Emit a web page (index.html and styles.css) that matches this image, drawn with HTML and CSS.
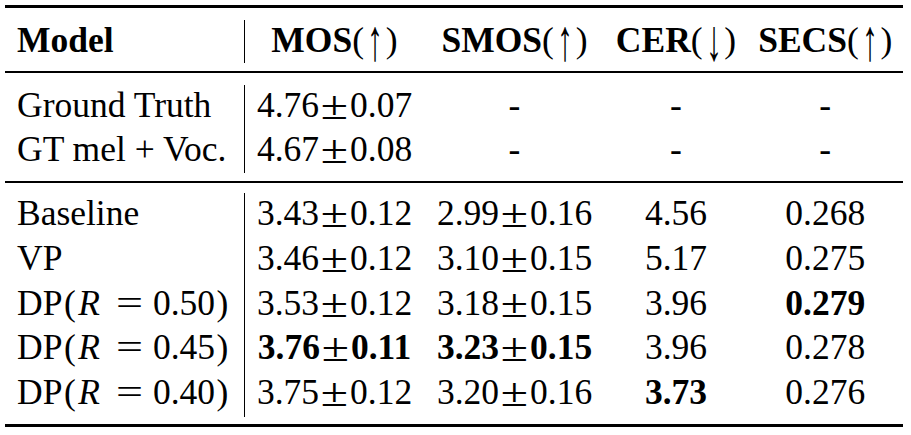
FILE: index.html
```html
<!DOCTYPE html>
<html>
<head>
<meta charset="utf-8">
<link rel="stylesheet" href="styles.css">
</head>
<body>
<div class="table">
  <div class="rule rule-top"></div>
  <div class="row head">
    <div class="cell first">Model</div>
    <div class="cell">MOS<span class="par">(<span class="arr">↑</span>)</span></div>
    <div class="cell">SMOS<span class="par">(<span class="arr">↑</span>)</span></div>
    <div class="cell">CER<span class="par">(<span class="arr">↓</span>)</span></div>
    <div class="cell">SECS<span class="par">(<span class="arr">↑</span>)</span></div>
  </div>
  <div class="rule rule-mid"></div>
  <div class="group g1">
    <div class="row">
      <div class="cell first">Ground Truth</div>
      <div class="cell">4.76<span class="pm">±</span>0.07</div>
      <div class="cell">-</div>
      <div class="cell">-</div>
      <div class="cell">-</div>
    </div>
    <div class="row">
      <div class="cell first">GT mel + Voc.</div>
      <div class="cell">4.67<span class="pm">±</span>0.08</div>
      <div class="cell">-</div>
      <div class="cell">-</div>
      <div class="cell">-</div>
    </div>
  </div>
  <div class="rule rule-sep"></div>
  <div class="group g2">
    <div class="row">
      <div class="cell first">Baseline</div>
      <div class="cell">3.43<span class="pm">±</span>0.12</div>
      <div class="cell">2.99<span class="pm">±</span>0.16</div>
      <div class="cell">4.56</div>
      <div class="cell">0.268</div>
    </div>
    <div class="row">
      <div class="cell first">VP</div>
      <div class="cell">3.46<span class="pm">±</span>0.12</div>
      <div class="cell">3.10<span class="pm">±</span>0.15</div>
      <div class="cell">5.17</div>
      <div class="cell">0.275</div>
    </div>
    <div class="row">
      <div class="cell first">DP<span class="paren">(</span><i class="var">R</i><span class="eq">=</span>0.50<span class="paren">)</span></div>
      <div class="cell">3.53<span class="pm">±</span>0.12</div>
      <div class="cell">3.18<span class="pm">±</span>0.15</div>
      <div class="cell">3.96</div>
      <div class="cell"><b>0.279</b></div>
    </div>
    <div class="row">
      <div class="cell first">DP<span class="paren">(</span><i class="var">R</i><span class="eq">=</span>0.45<span class="paren">)</span></div>
      <div class="cell"><b>3.76</b><span class="pm">±</span><b>0.11</b></div>
      <div class="cell"><b>3.23</b><span class="pm">±</span><b>0.15</b></div>
      <div class="cell">3.96</div>
      <div class="cell">0.278</div>
    </div>
    <div class="row">
      <div class="cell first">DP<span class="paren">(</span><i class="var">R</i><span class="eq">=</span>0.40<span class="paren">)</span></div>
      <div class="cell">3.75<span class="pm">±</span>0.12</div>
      <div class="cell">3.20<span class="pm">±</span>0.16</div>
      <div class="cell"><b>3.73</b></div>
      <div class="cell">0.276</div>
    </div>
  </div>
  <div class="rule rule-bot"></div>
</div>
</body>
</html>
```

FILE: styles.css
```css
html, body {
  margin: 0;
  padding: 0;
  background: #ffffff;
}

body {
  font-family: "Liberation Serif", "DejaVu Serif", serif;
  font-size: 35.5px;
  color: #000000;
}

.table {
  width: 898px;
  padding: 5px 0 0 5px;
}

.rule {
  background: #000000;
  width: 898px;
}

.rule-top {
  height: 2.5px;
  margin-bottom: 12.5px;
}

.rule-mid {
  height: 1.6px;
  margin-top: 8px;
  margin-bottom: 12.4px;
}

.rule-sep {
  height: 1.7px;
  margin-top: 8px;
  margin-bottom: 10.3px;
}

.rule-bot {
  height: 3px;
  margin-top: 7.3px;
}

.row {
  display: grid;
  grid-template-columns: 239.5px 180px 180px 143px 155.5px;
}

.cell {
  line-height: 39px;
  text-align: center;
  white-space: nowrap;
  padding-top: 1px;
  padding-bottom: 4px;
}

.head .cell {
  font-weight: bold;
  padding-top: 1px;
  padding-bottom: 3px;
}

.g2 .cell {
  padding-top: 1px;
  padding-bottom: 4.8px;
}

.cell.first {
  text-align: left;
  padding-left: 12px;
  border-right: 1.3px solid #000000;
  box-sizing: border-box;
}

.par {
  font-weight: normal;
}

.arr {
  display: inline-block;
  padding: 0 2px;
  transform: translateY(1px) scale(0.9, 1.65);
}

.pm {
  display: inline-block;
  width: 31px;
  text-align: center;
  font-weight: normal;
  transform: scale(1.4, 1.15);
}

.paren {
  display: inline-block;
  padding: 0 1.5px;
}

.var {
  font-style: italic;
  padding-left: 1px;
  padding-right: 6px;
}

.eq {
  display: inline-block;
  width: 27px;
  margin: 0 10px;
  text-align: center;
  transform: scaleX(1.35);
}

b {
  font-weight: bold;
}
```
